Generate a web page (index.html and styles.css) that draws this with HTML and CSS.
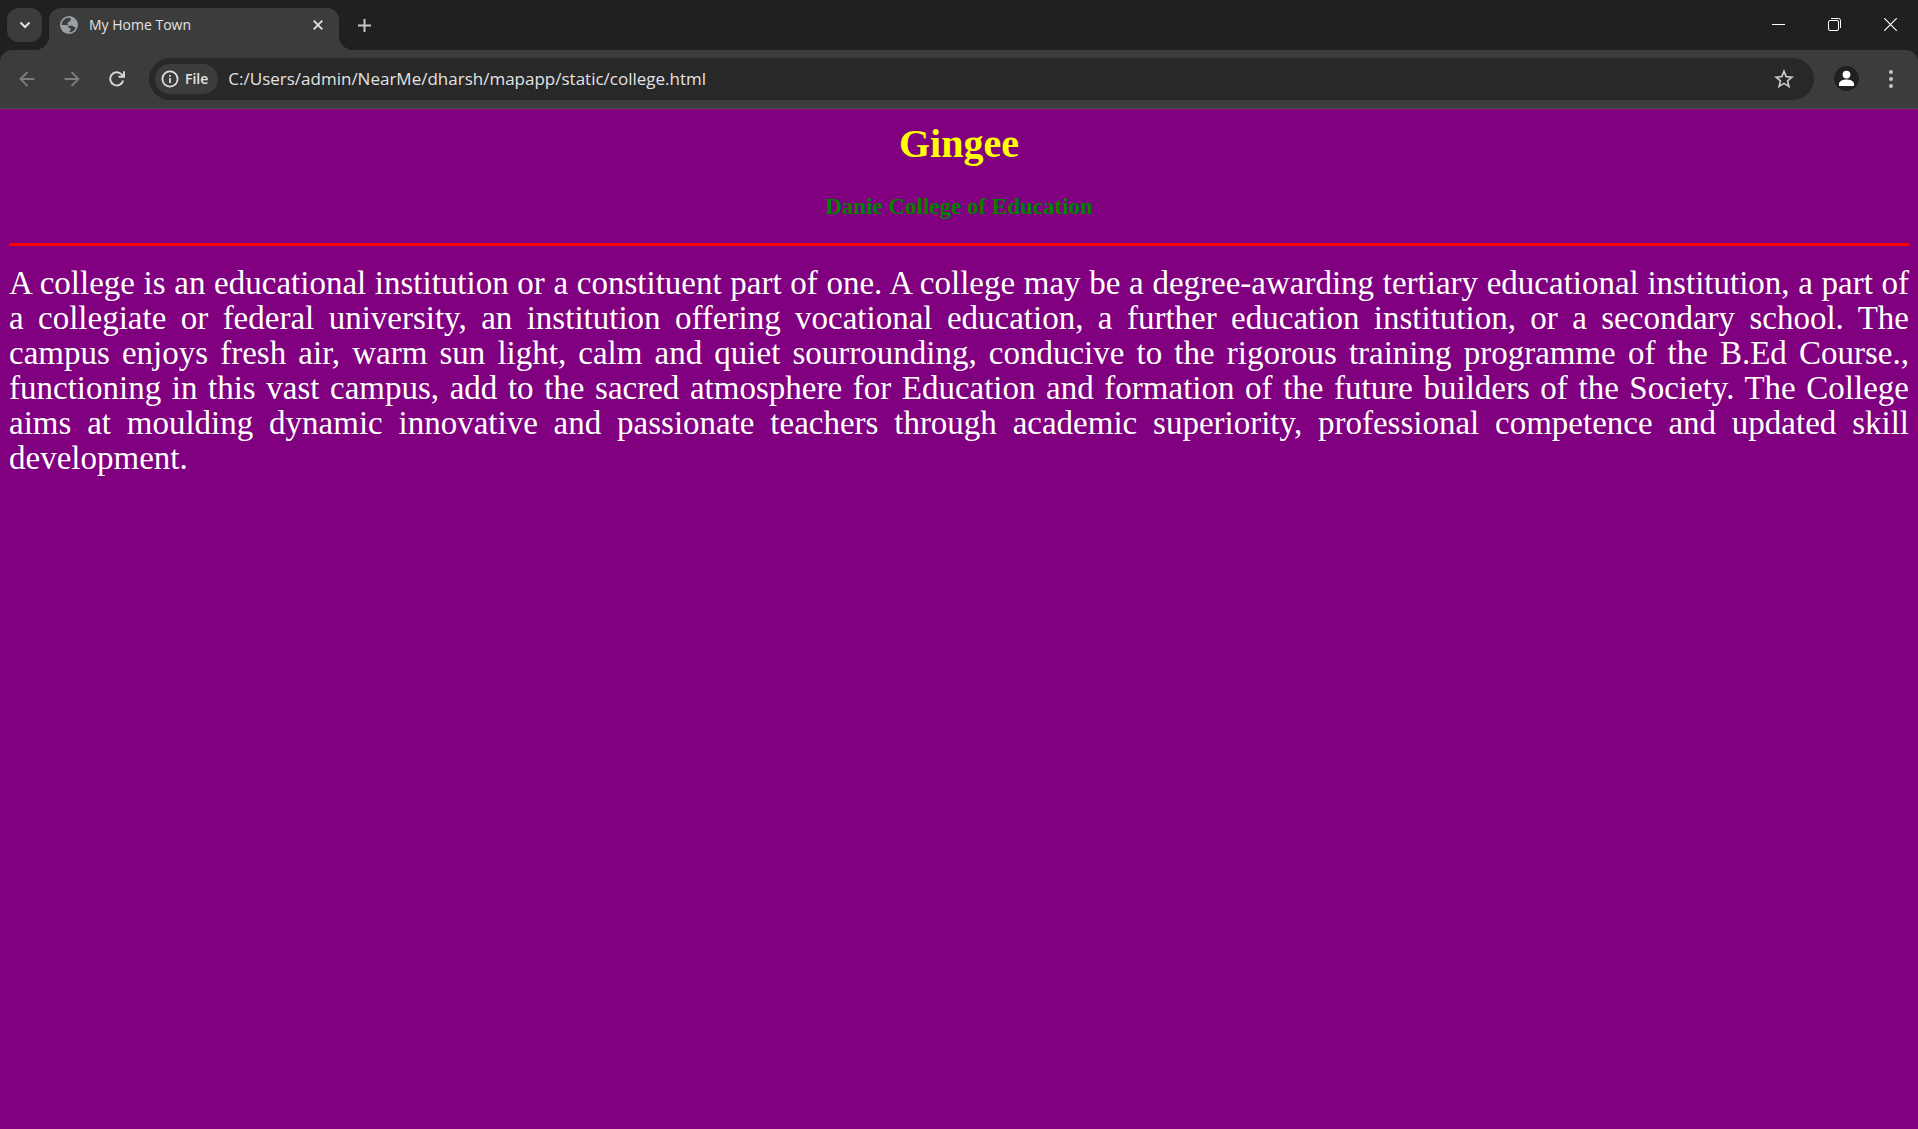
FILE: index.html
```html
<!DOCTYPE html>
<html lang="en">
<head>
<meta charset="utf-8">
<title>My Home Town</title>
<link rel="stylesheet" href="styles.css">
</head>
<body>
<header class="browser">
  <div class="tabstrip">
    <button class="tab-search" aria-label="Search tabs">
      <svg width="12" height="8" viewBox="0 0 12 8" fill="none" stroke="#e3e3e3" stroke-width="2"><path d="M1.500 1.500 6 6l4.500-4.500"/></svg>
    </button>
    <div class="tab">
      <svg class="favicon" width="18" height="18" viewBox="0 0 18 18"><circle cx="9" cy="9" r="9" fill="#9aa0a6"/><path d="M9.500 1.800C6.500 1.500 3.500 3.200 2.300 6.200c-.4 1-.5 2-.5 2.800h4.400c1.500 0 2.500.8 2.500 2.200v.9h1.800v1.700c0 .8-.5 1.500-1.200 1.800l-.6.600c3.500.1 6.300-1.900 7.200-5-.5.3-1.300.3-1.900-.1-.7-.4-.9-1.300-1.700-1.300h-2.400c-1.500 0-2.400-.8-2.400-2 0-1.300.9-2.200 2.200-2.200h.5c0-1.300.3-1.900 1.100-2.500z" fill="#3c3c3c"/></svg>
      <span class="tab-title">My Home Town</span>
      <button class="icon-button tab-close" aria-label="Close tab">
        <svg width="10" height="10" viewBox="0 0 10 10" stroke="#e3e3e3" stroke-width="1.800"><path d="M.7.7l8.600 8.600M9.300.7.7 9.300"/></svg>
      </button>
    </div>
    <button class="icon-button new-tab" aria-label="New tab">
      <svg width="13" height="13" viewBox="0 0 13 13" stroke="#c7c7c7" stroke-width="2"><path d="M6.500 0v13M0 6.500h13"/></svg>
    </button>
    <div class="window-controls">
      <button class="window-button" aria-label="Minimize"><svg width="13" height="13" viewBox="0 0 13 13" stroke="#fff"><path d="M0 6.500h13"/></svg></button>
      <button class="window-button" aria-label="Restore"><svg width="13" height="13" viewBox="0 0 13 13" fill="none" stroke="#fff"><rect x=".5" y="2.500" width="10" height="10" rx="1.500"/><path d="M3 .5h7.500a2 2 0 0 1 2 2V10"/></svg></button>
      <button class="window-button" aria-label="Close"><svg width="13" height="13" viewBox="0 0 13 13" stroke="#fff" stroke-width="1.200"><path d="M.3.3l12.400 12.400M12.700.3.3 12.700"/></svg></button>
    </div>
  </div>
  <div class="toolbar">
    <button class="icon-button nav" aria-label="Back"><svg width="16" height="16" viewBox="0 0 16 16" fill="none" stroke="#7d7d7d" stroke-width="1.800"><path d="M15.500 8H2M8.500 1 1.500 8l7 7"/></svg></button>
    <button class="icon-button nav" aria-label="Forward"><svg width="16" height="16" viewBox="0 0 16 16" fill="none" stroke="#7d7d7d" stroke-width="1.800"><path d="M.5 8H14M7.500 1l7 7-7 7"/></svg></button>
    <button class="icon-button nav" aria-label="Reload"><svg width="16" height="16" viewBox="0 0 16 16" fill="none" stroke="#d8d8d8" stroke-width="1.900"><path d="M14.200 9.500A6.600 6.600 0 1 1 12.800 3.500L14.600 5.400M15 .3v5.500H9.500"/></svg></button>
    <div class="omnibox">
      <button class="chip">
        <svg width="18" height="18" viewBox="0 0 18 18" fill="none" stroke="#dedede" stroke-width="1.800"><circle cx="9" cy="9" r="7.600"/><path d="M9 8v5M9 5v1.700"/></svg>
        File
      </button>
      <input class="address" type="text" aria-label="Address" value="C:/Users/admin/NearMe/dharsh/mapapp/static/college.html">
      <button class="icon-button star" aria-label="Bookmark this page"><svg width="20" height="20" viewBox="0 0 20 20" fill="none" stroke="#c7c7c7" stroke-width="1.700"><path d="M10 2.300l2.200 5.300 5.700.5-4.300 3.700 1.300 5.600-4.900-3-4.900 3 1.300-5.600L2.100 8.100l5.700-.5z"/></svg></button>
    </div>
    <button class="icon-button avatar" aria-label="Profile"><svg width="25" height="25" viewBox="0 0 25 25"><circle cx="12.500" cy="12.500" r="12.500" fill="#1f2121"/><g fill="#fff"><circle cx="12.500" cy="8.600" r="3.900"/><path d="M5 20v-2c0-3 4.500-4.400 7.500-4.400S20 15 20 18v2z"/></g></svg></button>
    <button class="icon-button menu" aria-label="Menu"><svg width="4" height="18" viewBox="0 0 4 18" fill="#c7c7c7"><circle cx="2" cy="2" r="2"/><circle cx="2" cy="9" r="2"/><circle cx="2" cy="16" r="2"/></svg></button>
  </div>
</header>
<main class="page">
  <h1 class="town">Gingee</h1>
  <h3 class="college">Danie College of Education</h3>
  <hr class="rule">
  <p class="about">
    A college is an educational institution or a constituent part of one. A college may be a degree-awarding tertiary educational institution, a part of<br>
    a collegiate or federal university, an institution offering vocational education, a further education institution, or a secondary school. The<br>
    campus enjoys fresh air, warm sun light, calm and quiet sourrounding, conducive to the rigorous training programme of the B.Ed Course.,<br>
    functioning in this vast campus, add to the sacred atmosphere for Education and formation of the future builders of the Society. The College<br>
    aims at moulding dynamic innovative and passionate teachers through academic superiority, professional competence and updated skill<br>
    development.
  </p>
</main>
</body>
</html>
```
FILE: styles.css
```css
* { box-sizing: border-box; }

body {
  margin: 0;
  min-height: 100vh;
  background: #800080;
}

button, input {
  border: 0;
  padding: 0;
  background: none;
  color: #e3e3e3;
  font-family: "Open Sans", "Noto Sans", sans-serif;
}

svg { display: block; }

.browser {
  background: #1f2121;
  font-family: "Open Sans", "Noto Sans", sans-serif;
}

.tabstrip {
  display: flex;
  align-items: flex-start;
  height: 50px;
  padding: 8px 0 0 7px;
}

.tab-search {
  display: grid;
  place-items: center;
  width: 35px;
  height: 34px;
  border-radius: 12px;
  background: #3c3c3c;
}

.tab {
  position: relative;
  display: flex;
  align-items: center;
  width: 290px;
  height: 42px;
  margin-left: 7px;
  padding: 0 16px 8px 11px;
  border-radius: 12px 12px 0 0;
  background: #3c3c3c;
}

.tab::before, .tab::after {
  content: "";
  position: absolute;
  bottom: 0;
  width: 14px;
  height: 14px;
}

.tab::before {
  right: 100%;
  background: radial-gradient(circle at 0 0, transparent 14px, #3c3c3c 14px);
}

.tab::after {
  left: 100%;
  background: radial-gradient(circle at 100% 0, transparent 14px, #3c3c3c 14px);
}

.tab-title {
  flex: 1;
  margin-left: 11px;
  color: #e3e3e3;
  font-size: 14px;
  line-height: 20px;
}

.icon-button {
  display: grid;
  place-items: center;
  flex: none;
}

.new-tab {
  width: 34px;
  height: 34px;
  margin-left: 8px;
}

.window-controls {
  display: flex;
  margin-left: auto;
}

.window-button {
  display: grid;
  place-items: center;
  width: 56px;
  height: 33px;
}

.toolbar {
  display: flex;
  align-items: center;
  height: 59px;
  padding: 0 12px 1px 4px;
  border-bottom: 1px solid #4a4a4a;
  border-radius: 12px 12px 0 0;
  background: #3c3c3c;
}

.nav {
  width: 45px;
  height: 42px;
}

.omnibox {
  display: flex;
  align-items: center;
  flex: 1;
  height: 42px;
  margin-left: 10px;
  padding: 0 20px 0 6px;
  border-radius: 21px;
  background: #282828;
}

.chip {
  display: flex;
  align-items: center;
  gap: 6px;
  height: 30px;
  padding: 0 10px 0 6px;
  border-radius: 15px;
  background: #3c3c3c;
  font-size: 14px;
  font-weight: 600;
}

.address {
  flex: 1;
  min-width: 0;
  height: 30px;
  margin-left: 10px;
  font-size: 17px;
}

.avatar { margin-left: 20px; }

.menu {
  width: 30px;
  height: 30px;
  margin-left: 17px;
}

.page {
  padding: 12px 9px;
  font-family: Georgia, "Liberation Serif", serif;
}

.town, .college {
  margin: 0;
  font-family: "Liberation Serif", serif;
  text-align: center;
}

.town {
  color: #ffff00;
  font-size: 40px;
  line-height: 46px;
}

.college {
  margin-top: 26px;
  color: #008000;
  font-size: 23px;
  line-height: 27px;
}

.rule {
  height: 3px;
  margin: 23px 0 20px;
  border: 0;
  background: #ff0000;
}

.about {
  margin: 0;
  color: #fff;
  font-size: 33px;
  line-height: 35px;
  text-align: justify;
  text-align-last: justify;
}
```
